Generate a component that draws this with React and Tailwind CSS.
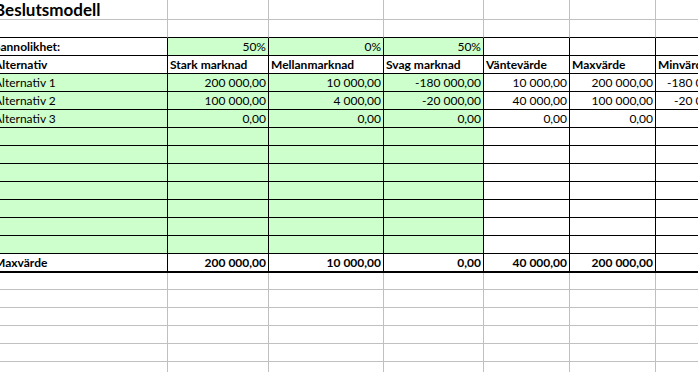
const cols = [
  "w-[176px]",
  "w-[101px]",
  "w-[115px]",
  "w-[100px]",
  "w-[86px]",
  "w-[86px]",
  "w-[80px]",
  "w-[80px]",
];

const heights = {
  20: "h-[20px]",
  19: "h-[19px]",
  18: "h-[18px]",
  17: "h-[17px]",
  11: "h-[11px]",
};

const bottoms = {
  gray: "border-b border-b-[#c0c0c0]",
  black: "border-b border-b-black",
  thick: "border-b-[2px] border-b-black",
};

const rights = {
  gray: "border-r border-r-[#c0c0c0]",
  black: "border-r border-r-black",
};

// cell: [text, align ('l' | 'r'), bold]
const empty = Array(8).fill(null);

const rows = [
  { h: 20, bottom: "gray", right: "gray", title: "Beslutsmodell" },
  { h: 18, bottom: "black", right: "gray" },
  {
    h: 18,
    bottom: "black",
    right: "black",
    green: [1, 2, 3],
    cells: [["Sannolikhet:", "l", true], ["50%", "r"], ["0%", "r"], ["50%", "r"]],
  },
  {
    h: 18,
    bottom: "black",
    right: "black",
    cells: [
      ["Alternativ", "l", true],
      ["Stark marknad", "l", true],
      ["Mellanmarknad", "l", true],
      ["Svag marknad", "l", true],
      ["Väntevärde", "l", true],
      ["Maxvärde", "l", true],
      ["Minvärde", "l", true],
    ],
  },
  {
    h: 18,
    bottom: "black",
    right: "black",
    green: [0, 1, 2, 3],
    cells: [
      ["Alternativ 1", "l"],
      ["200 000,00", "r"],
      ["10 000,00", "r"],
      ["-180 000,00", "r"],
      ["10 000,00", "r"],
      ["200 000,00", "r"],
      ["-180 000,00", "r"],
    ],
  },
  {
    h: 18,
    bottom: "black",
    right: "black",
    green: [0, 1, 2, 3],
    cells: [
      ["Alternativ 2", "l"],
      ["100 000,00", "r"],
      ["4 000,00", "r"],
      ["-20 000,00", "r"],
      ["40 000,00", "r"],
      ["100 000,00", "r"],
      ["-20 000,00", "r"],
    ],
  },
  {
    h: 18,
    bottom: "black",
    right: "black",
    green: [0, 1, 2, 3],
    cells: [
      ["Alternativ 3", "l"],
      ["0,00", "r"],
      ["0,00", "r"],
      ["0,00", "r"],
      ["0,00", "r"],
      ["0,00", "r"],
    ],
  },
  ...Array.from({ length: 7 }, () => ({
    h: 18,
    bottom: "black",
    right: "black",
    green: [0, 1, 2, 3],
  })),
  {
    h: 19,
    bottom: "thick",
    right: "black",
    cells: [
      ["Maxvärde", "l", true],
      ["200 000,00", "r", true],
      ["10 000,00", "r", true],
      ["0,00", "r", true],
      ["40 000,00", "r", true],
      ["200 000,00", "r", true],
    ],
  },
  { h: 17, bottom: "gray", right: "gray" },
  { h: 18, bottom: "gray", right: "gray" },
  { h: 18, bottom: "gray", right: "gray" },
  { h: 18, bottom: "gray", right: "gray" },
  { h: 18, bottom: "gray", right: "gray" },
  { h: 11, bottom: "gray", right: "gray" },
];

function Cell({ width, row, index }) {
  const cell = (row.cells || empty)[index];
  const green = row.green && row.green.includes(index);
  const isTitle = row.title && index === 0;
  return (
    <div
      className={`${width} shrink-0 h-full flex items-end px-[2px] whitespace-nowrap ${
        rights[row.right]
      } ${bottoms[row.bottom]} ${green ? "bg-[#ccffcc]" : "bg-white"} ${
        cell && cell[1] === "r" ? "justify-end" : "justify-start"
      }`}
    >
      {isTitle ? (
        <span className="text-[17px] font-bold leading-[19px]">{row.title}</span>
      ) : (
        cell && (
          <span className={`text-[12px] leading-[17px] ${cell[2] ? "font-bold" : ""}`}>
            {cell[0]}
          </span>
        )
      )}
    </div>
  );
}

export default function App() {
  return (
    <div className="w-[698px] h-[372px] overflow-hidden bg-white text-black font-[Lato,'Liberation_Sans',sans-serif]">
      <div className="ml-[-8px] w-max">
        {rows.map((row, r) => (
          <div key={r} className={`flex ${heights[row.h]}`}>
            {cols.map((w, i) => (
              <Cell key={i} width={w} row={row} index={i} />
            ))}
          </div>
        ))}
      </div>
    </div>
  );
}
